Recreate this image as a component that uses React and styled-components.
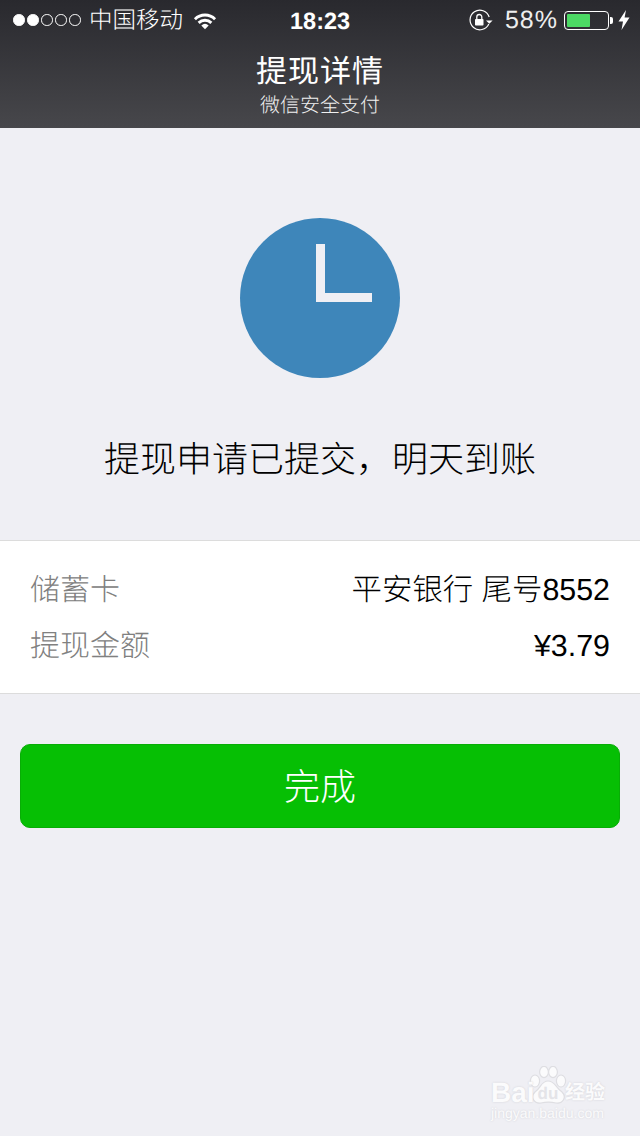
import * as React from 'react';
import styled, { createGlobalStyle } from "styled-components";

const CJK = `"Liberation Sans", "Noto Sans CJK SC", sans-serif`;

export default function App() {
    return (
        <Page>
            <GlobalStyle />
            <Header>
                <StatusBar>
                    <StatusLeft>
                        <Signal>
                            {[true, true, false, false, false].map((on, i) => <SignalDot key={i} $on={on} />)}
                        </Signal>
                        <Carrier>中国移动</Carrier>
                        <WifiIcon />
                    </StatusLeft>
                    <Clock>18:23</Clock>
                    <StatusRight>
                        <LockIcon />
                        <Percent>58%</Percent>
                        <Battery>
                            <BatteryFill $level={58} />
                        </Battery>
                        <BoltIcon />
                    </StatusRight>
                </StatusBar>
                <NavTitles>
                    <NavTitle>提现详情</NavTitle>
                    <NavSubtitle>微信安全支付</NavSubtitle>
                </NavTitles>
            </Header>
            <Hero>
                <ClockBadge />
                <Message>提现申请已提交，明天到账</Message>
            </Hero>
            <DetailCard>
                <DetailRow>
                    <DetailLabel>储蓄卡</DetailLabel>
                    <DetailValue>平安银行 尾号8552</DetailValue>
                </DetailRow>
                <DetailRow>
                    <DetailLabel>提现金额</DetailLabel>
                    <DetailValue>¥3.79</DetailValue>
                </DetailRow>
            </DetailCard>
            <ButtonWrap>
                <DoneButton>完成</DoneButton>
            </ButtonWrap>
            <Watermark>
                <PawIcon />
                <WatermarkBai>Bai</WatermarkBai>
                <WatermarkCn>经验</WatermarkCn>
                <WatermarkUrl>jingyan.baidu.com</WatermarkUrl>
            </Watermark>
        </Page>
    )
}

const WifiIcon = () => (
    <svg width="24" height="19" viewBox="0 0 26 20" style={{ marginLeft: 10 }}>
        <path d="M1 7.5 A17 17 0 0 1 25 7.5 L22.8 9.8 A14 14 0 0 0 3.2 9.8 Z" fill="#fff" />
        <path d="M5 11.4 A11.5 11.5 0 0 1 21 11.4 L18.8 13.7 A8.5 8.5 0 0 0 7.2 13.7 Z" fill="#fff" />
        <path d="M9 15.3 A6 6 0 0 1 17 15.3 L13 19.5 Z" fill="#fff" />
    </svg>
)

const LockIcon = () => (
    <svg width="24" height="22" viewBox="0 0 24 22">
        <path d="M19.8 15 A9.8 9.8 0 1 1 20.2 8" fill="none" stroke="#fff" strokeWidth="1.2" />
        <path d="M17 11.4 L23.6 11.4 L20.3 14.8 Z" fill="#fff" />
        <rect x="6" y="10" width="8.5" height="6.5" rx="0.8" fill="#fff" />
        <path d="M7.8 10.2 V8 A2.5 2.5 0 0 1 12.8 8 V10.2" fill="none" stroke="#fff" strokeWidth="1.3" />
    </svg>
)

const BoltIcon = () => (
    <svg width="12" height="20" viewBox="0 0 12 20" style={{ marginLeft: 9 }}>
        <path d="M8 0 L0.5 11.5 L5 11.5 L3.5 20 L11.5 7.5 L6.6 7.5 Z" fill="#fff" />
    </svg>
)

const PawIcon = () => (
    <PawSvg width="44" height="44" viewBox="0 0 44 44">
        <g fill="none" stroke="#dedee2" strokeWidth="1.2">
            <ellipse cx="7" cy="15" rx="4.6" ry="6" fill="#fbfbfc" />
            <ellipse cx="16" cy="6" rx="4.4" ry="5.6" fill="#fbfbfc" />
            <ellipse cx="25" cy="6" rx="4.4" ry="5.6" fill="#fbfbfc" />
            <ellipse cx="33" cy="15" rx="4.6" ry="6" fill="#fbfbfc" />
            <path d="M20 15 C27 15 28 22 34 26 C39 31 35 38 28 37 C24 36 17 36 13 37 C6 38 2 31 7 26 C13 22 13 15 20 15 Z" fill="#fbfbfc" />
        </g>
        <text x="20" y="33" textAnchor="middle" fontFamily="Liberation Sans, sans-serif" fontWeight="700" fontSize="17" fill="#e4e4e8">du</text>
    </PawSvg>
)

const GlobalStyle = createGlobalStyle`
  html, body {
    margin: 0;
    padding: 0;
    background: #efeff4;
  }
  * {
    box-sizing: border-box;
  }
`

const Page = styled.div`
  position: relative;
  width: 640px;
  height: 1136px;
  overflow: hidden;
  background: #efeff4;
  font-family: ${CJK};
  font-weight: 300;
  text-rendering: geometricPrecision;
`

const Header = styled.header`
  height: 128px;
  background: linear-gradient(180deg, #29292e 0%, #47474b 100%);
  color: #fff;
`

const StatusBar = styled.div`
  position: relative;
  height: 40px;
  display: flex;
  align-items: center;
  justify-content: space-between;
  padding: 0 10px 0 13px;
`

const StatusLeft = styled.div`
  display: flex;
  align-items: center;
`

const StatusRight = styled.div`
  display: flex;
  align-items: center;
`

const Signal = styled.div`
  display: flex;
  gap: 2.5px;
`

const SignalDot = styled.span`
  width: 11.5px;
  height: 11.5px;
  border-radius: 50%;
  border: 1px solid #fff;
  background: ${props => props.$on ? '#fff' : 'transparent'};
`

const Carrier = styled.span`
  margin-left: 8.5px;
  font-size: 23.5px;
  line-height: 42px;
  color: #fff;
`

const Clock = styled.span`
  position: absolute;
  left: 290px;
  top: 0;
  font-size: 23.5px;
  line-height: 42px;
  font-weight: 700;
`

const Percent = styled.span`
  margin-left: 12px;
  font-size: 25px;
  letter-spacing: 1px;
  line-height: 42px;
  color: #eee;
`

const Battery = styled.div`
  position: relative;
  margin-left: 6px;
  width: 45px;
  height: 19px;
  padding: 2px;
  border: 1px solid #fff;
  border-radius: 4px;
  &::after {
    content: "";
    position: absolute;
    right: -5px;
    top: 5px;
    width: 3px;
    height: 7px;
    background: #fff;
    border-radius: 0 2px 2px 0;
  }
`

const BatteryFill = styled.div`
  height: 100%;
  width: ${props => props.$level}%;
  background: #4cd964;
  border-radius: 1px;
`

const NavTitles = styled.div`
  display: flex;
  flex-direction: column;
  align-items: center;
`

const NavTitle = styled.div`
  font-size: 31px;
  font-weight: 400;
  letter-spacing: 1px;
  line-height: 40px;
  margin-top: 12px;
`

const NavSubtitle = styled.div`
  font-size: 20px;
  line-height: 28px;
  color: #f0f0f0;
`

const Hero = styled.section`
  height: 412px;
  padding-top: 90px;
  display: flex;
  flex-direction: column;
  align-items: center;
`

const ClockBadge = styled.div`
  position: relative;
  width: 160px;
  height: 160px;
  border-radius: 50%;
  background: #3e86ba;
  &::before {
    content: "";
    position: absolute;
    left: 76px;
    top: 26px;
    width: 9px;
    height: 58px;
    background: #efeff4;
  }
  &::after {
    content: "";
    position: absolute;
    left: 76px;
    top: 75px;
    width: 56px;
    height: 9px;
    background: #efeff4;
  }
`

const Message = styled.div`
  margin-top: 58px;
  font-size: 36px;
  line-height: 48px;
  color: #000;
`

const DetailCard = styled.section`
  height: 154px;
  padding: 21px 30px 0;
  background: #fff;
  border-top: 1px solid #dcdcdc;
  border-bottom: 1px solid #dcdcdc;
`

const DetailRow = styled.div`
  height: 56px;
  display: flex;
  align-items: baseline;
  justify-content: space-between;
  line-height: 56px;
`

const DetailLabel = styled.span`
  font-size: 30px;
  color: #808080;
`

const DetailValue = styled.span`
  font-size: 30.4px;
  color: #000;
`

const ButtonWrap = styled.div`
  padding: 50px 20px 0;
`

const DoneButton = styled.button`
  display: block;
  width: 100%;
  height: 84px;
  padding: 0 0 4px;
  border: 1px solid #08ad06;
  border-radius: 10px;
  background: #06bf04;
  color: #fff;
  font-family: ${CJK};
  font-weight: 300;
  font-size: 36px;
  cursor: pointer;
`

const Watermark = styled.div`
  position: absolute;
  left: 490px;
  top: 1066px;
  width: 120px;
  height: 56px;
`

const PawSvg = styled.svg`
  position: absolute;
  left: 38px;
  top: 0;
`

const WatermarkBai = styled.div`
  position: absolute;
  left: 1px;
  top: 13px;
  font-size: 28px;
  line-height: 28px;
  font-weight: 700;
  color: #fbfbfc;
  text-shadow: 0 0 2px #cfcfd4;
`

const WatermarkCn = styled.div`
  position: absolute;
  left: 75px;
  top: 14px;
  font-size: 20px;
  line-height: 26px;
  font-weight: 700;
  color: #fbfbfc;
  text-shadow: 0 0 2px #cfcfd4;
  white-space: nowrap;
`

const WatermarkUrl = styled.div`
  position: absolute;
  left: 1px;
  top: 38px;
  font-size: 14px;
  line-height: 18px;
  color: #fbfbfc;
  text-shadow: 0 0 2px #cfcfd4;
  white-space: nowrap;
`
